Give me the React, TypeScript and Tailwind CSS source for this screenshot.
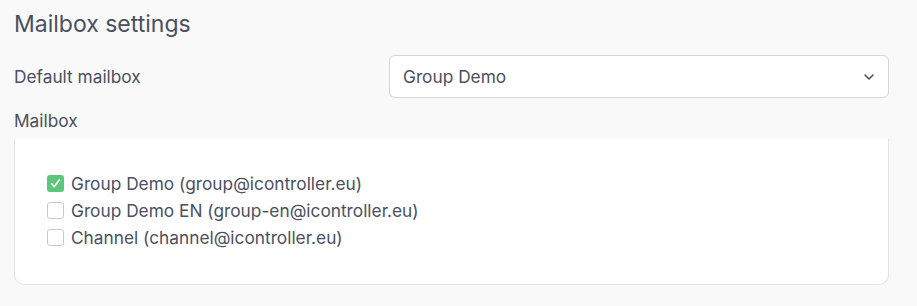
import React from "react";

const items = [
  { label: "Group Demo (group@icontroller.eu)", checked: true },
  { label: "Group Demo EN (group-en@icontroller.eu)", checked: false },
  { label: "Channel (channel@icontroller.eu)", checked: false },
];

function Box({ checked }: { checked: boolean }) {
  if (checked) {
    return (
      <span className="flex h-[17px] w-[17px] shrink-0 items-center justify-center rounded-[3px] bg-[#5cc67d]">
        <svg width="13" height="13" viewBox="0 0 13 13" fill="none">
          <path d="M2.5 6.5 L5.3 9.6 L10.5 2.8" stroke="white" strokeWidth="1.6" strokeLinecap="round" strokeLinejoin="round" />
        </svg>
      </span>
    );
  }
  return <span className="h-[17px] w-[17px] shrink-0 rounded-[3px] border border-[#c9c9cc] bg-white" />;
}

export default function App() {
  return (
    <div
      className="min-h-[306px] w-full bg-[#f9f9f9] px-[14px] pt-[10px] text-[#4a5060]"
      style={{ fontFamily: "Inter, 'Noto Sans', sans-serif" }}
    >
      <h2 className="h-[28px] text-[23px] leading-[28px] font-normal">Mailbox settings</h2>
      <div className="mt-[17px] flex h-[43px] items-center justify-between pr-[14px]">
        <span className="text-[17.3px] leading-[24px]">Default mailbox</span>
        <div className="flex h-[43px] w-[500px] items-center justify-between rounded-[6px] border border-[#d6d6d9] bg-white pl-[13px] pr-[12px]">
          <span className="text-[17.3px] leading-[24px]">Group Demo</span>
          <svg width="14" height="14" viewBox="0 0 14 14" fill="none">
            <path d="M3 5 L7 9 L11 5" stroke="#4a5060" strokeWidth="1.6" strokeLinecap="round" strokeLinejoin="round" />
          </svg>
        </div>
      </div>
      <div className="mt-[11px] text-[17.3px] leading-[24px]">Mailbox</div>
      <div className="mt-[6px] mr-[14px] h-[146px] rounded-b-[10px] border-x border-b border-[#e4e4e6] bg-white pt-[31px] pl-[32px]">
        {items.map((it) => (
          <label key={it.label} className="flex h-[27px] items-center gap-[7px] text-[17.3px] leading-[24px]">
            <Box checked={it.checked} />
            <span>{it.label}</span>
          </label>
        ))}
      </div>
    </div>
  );
}
